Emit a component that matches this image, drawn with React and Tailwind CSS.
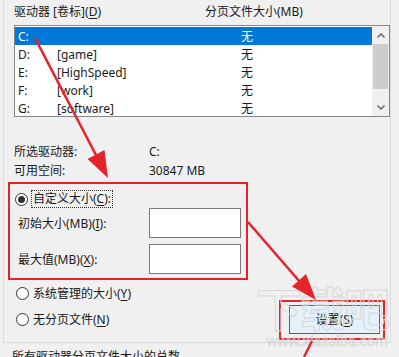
import React from 'react';

const drives = [
  { letter: 'C:', label: '', size: '无', selected: true },
  { letter: 'D:', label: '[game]', size: '无' },
  { letter: 'E:', label: '[HighSpeed]', size: '无' },
  { letter: 'F:', label: '[work]', size: '无' },
  { letter: 'G:', label: '[software]', size: '无' },
];

const Radio = ({ checked }) => (
  <span className="flex h-[13px] w-[13px] shrink-0 items-center justify-center rounded-full border border-[#333] bg-white">
    {checked && <span className="h-[7px] w-[7px] rounded-full bg-[#333]" />}
  </span>
);

const Key = ({ children }) => <span className="underline underline-offset-2">{children}</span>;

export default function App() {
  return (
    <div className="relative h-[357px] w-[399px] overflow-hidden bg-[#f0f0f0] font-['Noto_Sans','Noto_Sans_CJK_SC',sans-serif] text-[12px] leading-[19px] text-[#111]">
      {/* group box */}
      <div className="ml-[3px] h-[343px] w-[388px] border-x border-b border-[#dcdcdc] pl-[10px]">
        {/* list header */}
        <div className="flex h-[25px] pt-[2px] text-[#1a1a1a]">
          <div className="w-[191px]">
            驱动器 [卷标](<Key>D</Key>)
          </div>
          <div>分页文件大小(MB)</div>
        </div>

        {/* list box */}
        <div className="flex h-[92px] w-[376px] border border-[#828790] bg-white">
          <div className="flex-1 pt-[1px]">
            {drives.map((d) => (
              <div
                key={d.letter}
                className={`flex h-[18px] items-center ${d.selected ? 'bg-[#0078d7] text-white' : 'text-[#1a1a1a]'}`}
              >
                <div className="w-[42px] pl-[3px]">{d.letter}</div>
                <div className="w-[184px]">{d.label}</div>
                <div>{d.size}</div>
              </div>
            ))}
          </div>
          <div className="flex w-[17px] flex-col bg-[#f0f0f0]">
            <div className="flex h-[18px] items-center justify-center">
              <svg width="8" height="5" viewBox="0 0 8 5">
                <path d="M0.5 4.5 L4 1 L7.5 4.5" fill="none" stroke="#606060" strokeWidth="1.4" />
              </svg>
            </div>
            <div className="flex-1">
              <div className="mx-auto h-[45px] w-[15px] bg-[#cdcdcd]" />
            </div>
            <div className="flex h-[18px] items-center justify-center">
              <svg width="8" height="5" viewBox="0 0 8 5">
                <path d="M0.5 0.5 L4 4 L7.5 0.5" fill="none" stroke="#606060" strokeWidth="1.4" />
              </svg>
            </div>
          </div>
        </div>

        {/* drive info */}
        <div className="mt-[25px] text-[#1a1a1a]">
          <div className="flex h-[19px]">
            <div className="w-[135px]">所选驱动器:</div>
            <div>C:</div>
          </div>
          <div className="flex h-[19px]">
            <div className="w-[135px]">可用空间:</div>
            <div>30847 MB</div>
          </div>
        </div>

        {/* custom size section (annotated) */}
        <div className="ml-[-6px] mt-[2px] h-[98px] w-[240px] border-2 border-[#e3242b] pb-[4px] pt-[6px] text-[#1a1a1a]">
          <div className="flex h-[18px] items-center gap-[3px] pl-[5px]">
            <Radio checked />
            <span className="border border-dotted border-[#333] px-[1px] leading-[16px]">
              自定义大小(<Key>C</Key>):
            </span>
          </div>
          <div className="flex h-[30px] items-center pl-[8px]">
            <div className="w-[131px]">
              初始大小(MB)(<Key>I</Key>):
            </div>
            <div className="h-[30px] w-[92px] border border-[#7a7a7a] bg-white" />
          </div>
          <div className="mt-[6px] flex h-[30px] items-center pl-[8px]">
            <div className="w-[131px]">
              最大值(MB)(<Key>X</Key>):
            </div>
            <div className="h-[30px] w-[92px] border border-[#7a7a7a] bg-white" />
          </div>
        </div>

        {/* bottom options + set button */}
        <div className="flex justify-between text-[#1a1a1a]">
          <div className="pl-[2px]">
            <div className="mt-[4px] flex h-[19px] items-center gap-[4px]">
              <Radio />
              <span>
                系统管理的大小(<Key>Y</Key>)
              </span>
            </div>
            <div className="mt-[7px] flex h-[19px] items-center gap-[4px]">
              <Radio />
              <span>
                无分页文件(<Key>N</Key>)
              </span>
            </div>
          </div>
          <div className="mr-[5px] mt-[20px] h-[40px] w-[106px] border-2 border-[#e3242b] pl-[8px] pt-[3px]">
            <button className="flex h-[29px] w-[91px] items-center justify-center border border-[#0078d7] bg-[#e5f1fb] text-[#111]">
              设置(<Key>S</Key>)
            </button>
          </div>
        </div>
      </div>

      <div className="pl-[12px] pt-[4px] text-[#1a1a1a]">所有驱动器分页文件大小的总数</div>

      {/* watermark */}
      <div className="pointer-events-none absolute left-[256px] top-[280px] flex flex-col items-end">
        <div className="text-[46px] font-bold leading-[56px] tracking-[-2px] text-transparent [-webkit-text-stroke:1px_#d8d8d8]">
          下载吧
        </div>
        <div className="mt-[-2px] text-[14px] leading-[14px] text-transparent [-webkit-text-stroke:0.6px_#d2d2d2]">
          www.xiazaiba.com
        </div>
      </div>

      {/* red arrows */}
      <svg className="pointer-events-none absolute inset-0" width="399" height="357" viewBox="0 0 399 357">
        <line x1="35" y1="38" x2="97" y2="157" stroke="#e3242b" strokeWidth="2.6" />
        <polygon points="108,178 104.5,150 87.5,159" fill="#e3242b" />
        <line x1="248" y1="222" x2="300" y2="282" stroke="#e3242b" strokeWidth="2.6" />
        <polygon points="316,300 306,274 292,286.5" fill="#e3242b" />
        <line x1="312" y1="341" x2="304" y2="357" stroke="#e3242b" strokeWidth="2.4" />
      </svg>
    </div>
  );
}
